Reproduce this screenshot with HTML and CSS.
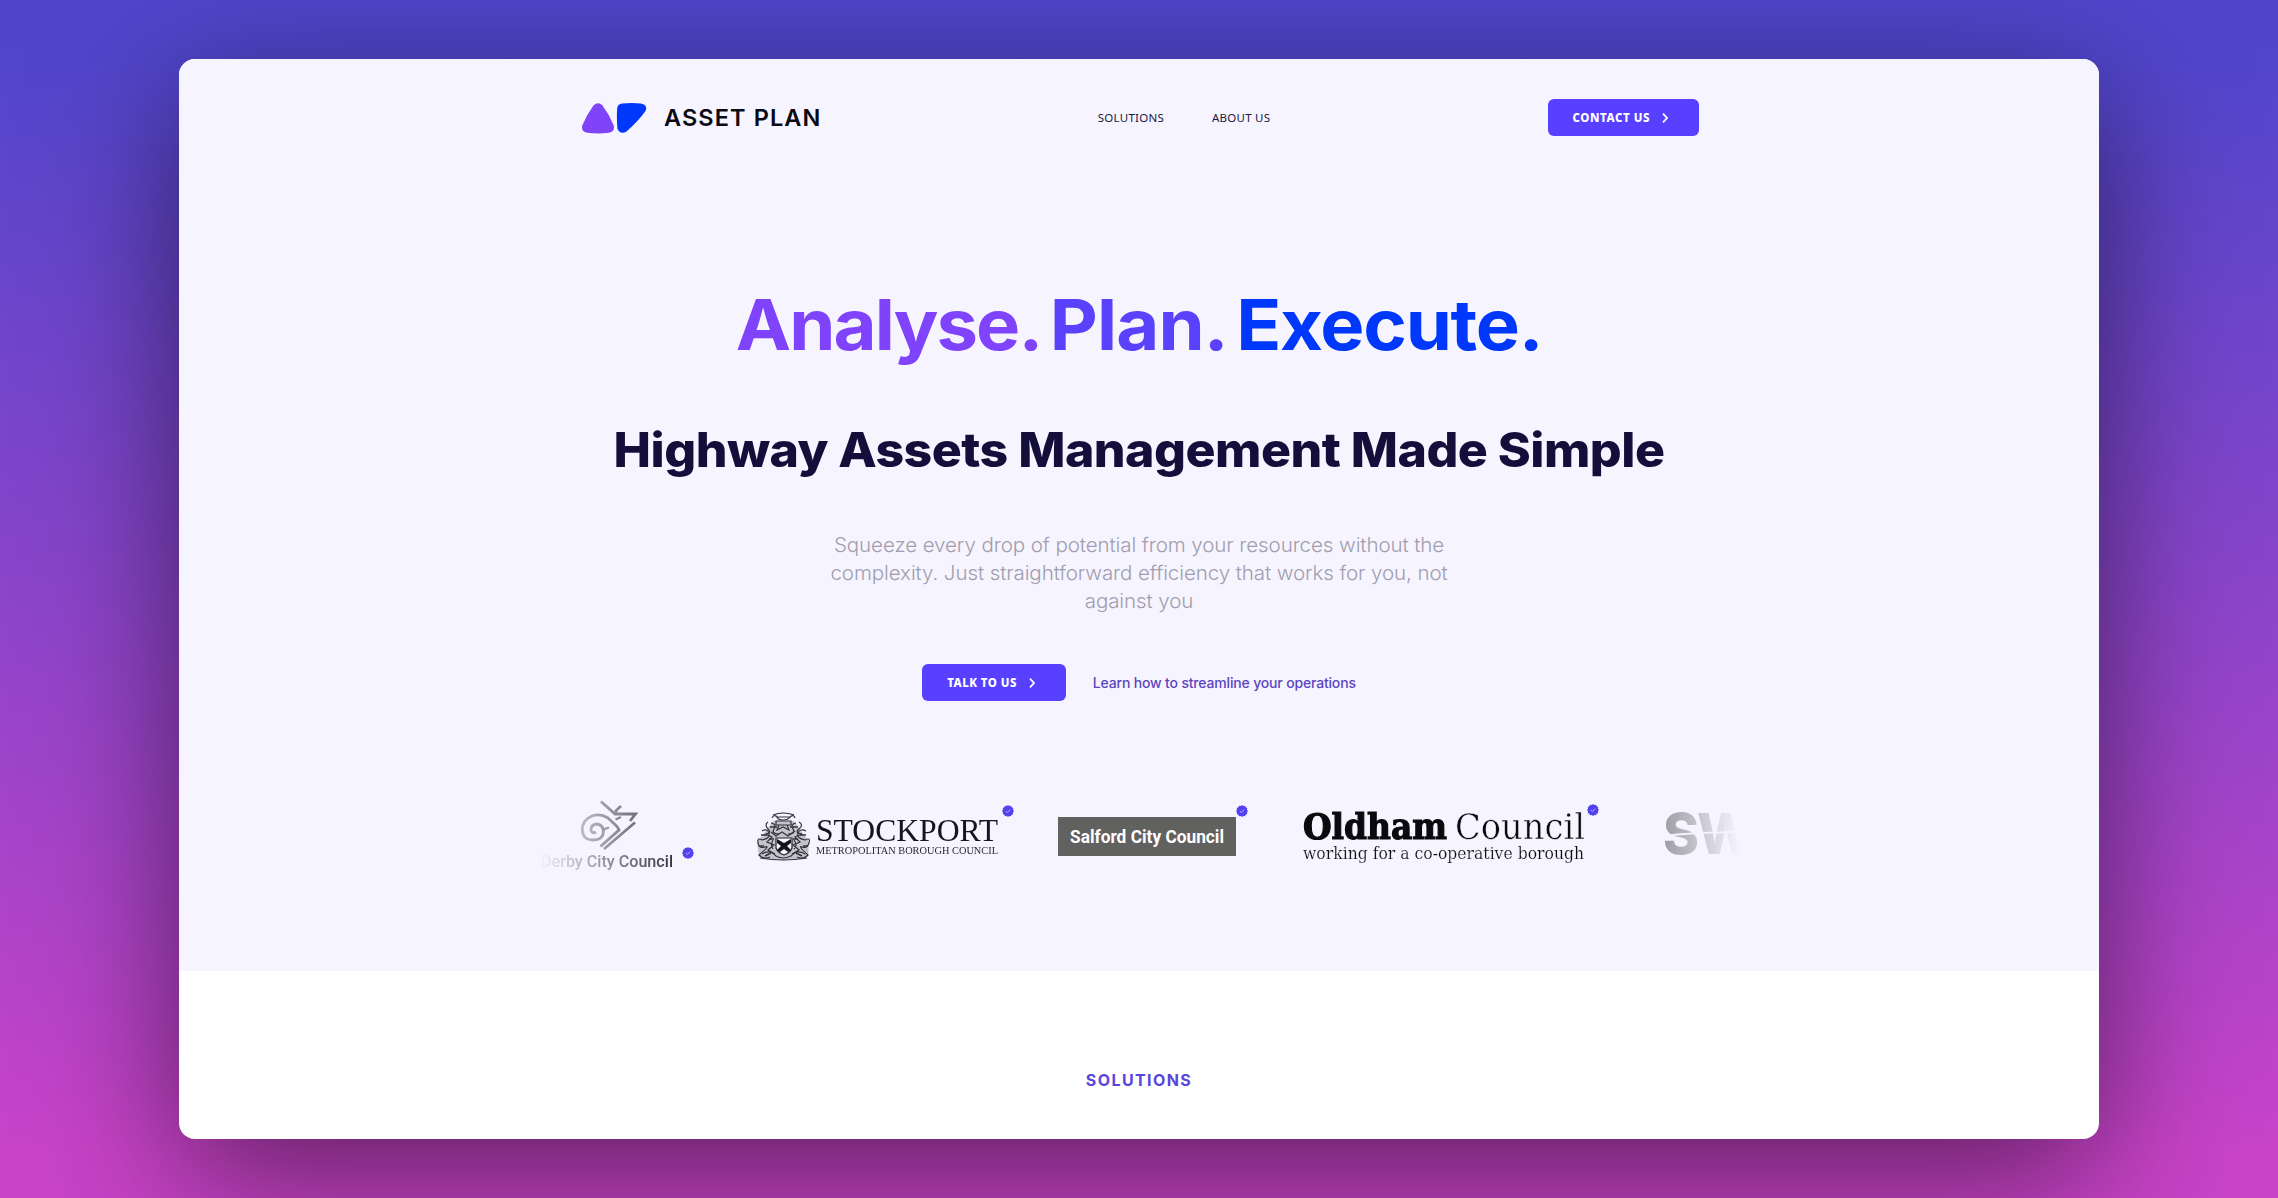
FILE: index.html
```html
<!DOCTYPE html>
<html lang="en">
<head>
<meta charset="utf-8">
<title>Asset Plan</title>
<link rel="stylesheet" href="styles.css">
</head>
<body>
<svg width="0" height="0" class="defs" aria-hidden="true">
  <symbol id="verified" viewBox="0 0 12 12">
    <path d="M6 0l1.300 1L9 .8l.7 1.500 1.500.7L11 4.700 12 6l-1 1.300.2 1.700-1.500.7L9 11.200 7.300 11 6 12l-1.300-1-1.700.2-.7-1.500L.8 9 1 7.300 0 6l1-1.300L.8 3l1.500-.7L3 .8 4.700 1z" fill="#5442f0"/>
    <path d="M3.900 6.100l1.500 1.400 2.800-2.900" fill="none" stroke="#b9aeff" stroke-width="1"/>
  </symbol>
</svg>
<div class="card">
  <section class="hero">
    <header class="header">
      <a class="brand">
        <svg width="65" height="31" viewBox="0 0 65 31">
          <path d="M11.500 2.500Q16 -2 20.500 2.500Q27.500 12 31.500 22Q33.500 28.500 27 29.800Q16 31 5 29.800Q-1.500 28.500 .5 22Q4.500 12 11.500 2.500Z" fill="#7f43f8"/>
          <path d="M40 .4Q50 -.2 59 .4Q66 2 63.500 8Q56 18.500 44.500 28.500Q38 32 35.400 25.500Q34.500 15 35.200 5Q36 .7 40 .4Z" fill="#0038fb"/>
        </svg>
        <span class="brand-name">ASSET PLAN</span>
      </a>
      <nav class="nav"><a>SOLUTIONS</a><a>ABOUT US</a></nav>
      <a class="button">CONTACT US
        <svg width="6" height="10" viewBox="0 0 6 10"><path d="M1 .6L5 5 1 9.400" fill="none" stroke="#fff" stroke-width="1.700"/></svg>
      </a>
    </header>
    <h1 class="headline"><span class="analyse">Analyse.</span><span class="plan">Plan.</span><span class="execute">Execute.</span></h1>
    <h2 class="subhead">Highway Assets Management Made Simple</h2>
    <p class="lead">Squeeze every drop of potential from your resources without the<br>complexity. Just straightforward efficiency that works for you, not<br>against you</p>
    <div class="actions">
      <a class="button">TALK TO US
        <svg width="6" height="10" viewBox="0 0 6 10"><path d="M1 .6L5 5 1 9.400" fill="none" stroke="#fff" stroke-width="1.700"/></svg>
      </a>
      <a class="link">Learn how to streamline your operations</a>
    </div>
    <div class="logos">
      <div class="logo derby">
        <svg width="136" height="74" viewBox="0 0 136 74">
          <g fill="none" stroke="#45434c" stroke-width="2.800">
            <path d="M62 1.500L76 14H96.500L91 21M77 14V10.500L82 6"/>
            <path d="M96 22.500L65 49M61.500 46.500L80 30Q79 27.500 77.500 26L69 18Q61 13 53 16Q43 20 43.200 30Q44 40 54 40Q64 40 64.500 31.500Q64 24.500 57.500 24Q51.500 25 52 30.500Q53.500 34 57 32"/>
            <path d="M63 30L70 27.500M76.500 19.500L82 17" stroke-width="2.200"/>
          </g>
          <text x="2" y="67" textLength="132" lengthAdjust="spacingAndGlyphs" class="din" fill="#37353e">Derby City Council</text>
        </svg>
        <svg class="badge"><use href="#verified"/></svg>
      </div>
      <div class="logo stockport">
        <svg width="242" height="50" viewBox="0 0 242 50">
          <path d="M17 9L38 9L46 20L53 30L52 45Q27 51 3 45L1 30L9 20Z" fill="#c4c3cb"/>
          <g fill="none" stroke="#33323a" stroke-width="1.200">
            <path d="M17 3Q27 -1 38 3M16 6Q18 2 21 5L34 5Q38 2 39 6M21 5Q22 8 27 8T34 5"/>
            <path d="M20 9H35V13H20ZM23 13L21 18L27 15L33 18L31 13M12 10Q8 13 12 17T10 22M43 10Q48 13 43 17T46 22M15 11Q21 12 18 17T23 22M40 11Q34 12 37 17T32 22"/>
            <path d="M6 19Q11 16 13 21T6 28Q1 25 2 31T9 35T3 43Q8 48 14 45M50 19Q44 16 42 21T49 28Q55 25 53 31T46 35T52 43Q47 48 41 45"/>
            <path d="M9 22L16 25L11 30L18 33L12 38L19 42M46 22L39 25L44 30L37 33L43 38L36 42M4 46Q27 50 51 46M6 42Q14 37 20 44Q27 48 35 44Q41 37 49 42M15 20L20 24L26 20L32 24L39 19M17 28Q14 33 17 37M38 28Q42 33 38 37"/>
            <path d="M5 23H11M3 34H8M47 34H52M44 23H50M13 27H18M37 27H42M9 44L15 41M40 41L46 44M14 15H21M34 15H42" stroke-width="1.600"/>
          </g>
          <path d="M20 26H36V36Q34 41 28 43Q22 41 20 36Z" fill="#f6f4fe" stroke="#222" stroke-width="1.200"/>
          <path d="M21 27L28 31L35 27V31L31 34L35 38L32 40L28 37L24 40L21 38L25 34L21 31Z" fill="#15151a"/>
          <text x="60" y="28.500" textLength="182" lengthAdjust="spacingAndGlyphs" class="serif" font-size="32.500" fill="#16151f">STOCKPORT</text>
          <text x="60" y="42" textLength="182" lengthAdjust="spacingAndGlyphs" class="serif" font-size="11" fill="#2b2a33">METROPOLITAN BOROUGH COUNCIL</text>
        </svg>
        <svg class="badge"><use href="#verified"/></svg>
      </div>
      <div class="logo salford">
        <svg width="178" height="39" viewBox="0 0 178 39">
          <rect width="178" height="39" fill="#616160"/>
          <text x="12" y="26" textLength="154" lengthAdjust="spacingAndGlyphs" class="din bold" fill="#fff">Salford City Council</text>
        </svg>
        <svg class="badge"><use href="#verified"/></svg>
      </div>
      <div class="logo oldham">
        <svg width="282" height="52" viewBox="0 0 282 52">
          <text x="0" y="27" textLength="144" lengthAdjust="spacingAndGlyphs" class="slab heavy">Oldham</text>
          <text x="152" y="27" textLength="130" lengthAdjust="spacingAndGlyphs" class="slab thin">Council</text>
          <text x="0" y="47" textLength="281" lengthAdjust="spacingAndGlyphs" class="slab small">working for a co-operative borough</text>
        </svg>
        <svg class="badge"><use href="#verified"/></svg>
      </div>
      <div class="logo sw">
        <svg width="88" height="44" viewBox="0 0 88 44">
          <text x="-2" y="42" textLength="90" lengthAdjust="spacingAndGlyphs" class="swt">SW</text>
          <path d="M0 24Q30 20 88 20" fill="none" stroke="#f6f4fe" stroke-width="2"/>
        </svg>
      </div>
    </div>
  </section>
  <section class="solutions">
    <h3 class="eyebrow">SOLUTIONS</h3>
  </section>
</div>
</body>
</html>
```
FILE: styles.css
```css
* { box-sizing: border-box; }
body {
  margin: 0;
  height: 1198px;
  padding: 59px 179px;
  overflow: hidden;
  background: linear-gradient(#5046cc 0%, #5046cc 4%, #c843c8 96%, #c843c8 100%);
  font-family: Inter, "Liberation Sans", sans-serif;
}
.defs { position: absolute; }
.card {
  width: 1920px;
  height: 1080px;
  border-radius: 16px;
  overflow: hidden;
  background: #fff;
  box-shadow: 0 36px 140px rgba(0, 0, 0, .54);
}
.hero { height: 912px; background: #f6f4fe; }
.header {
  display: flex;
  justify-content: space-between;
  align-items: center;
  padding: 40px 400px 0 403px;
}
.brand { display: flex; align-items: center; gap: 17px; width: 239px; padding-top: 1px; }
.brand svg { flex: none; }
.brand-name { font-size: 23.5px; font-weight: 600; line-height: 30px; letter-spacing: 1.1px; color: #0b0a14; white-space: nowrap; }
.nav { display: flex; gap: 48px; width: 173px; font: 400 11.5px/16px "Noto Sans", sans-serif; letter-spacing: .25px; color: #1c173f; white-space: nowrap; }
.button {
  display: flex;
  align-items: center;
  gap: 12px;
  height: 37px;
  padding: 0 31px 0 25px;
  border-radius: 6px;
  background: #5740ff;
  color: #fff;
  font: 800 11.5px/16px "Noto Sans", sans-serif;
  letter-spacing: .55px;
  white-space: nowrap;
}
.headline {
  display: flex;
  justify-content: center;
  gap: 8px;
  margin: 146px 0 0;
  font-size: 70px;
  font-weight: 700;
  line-height: 86px;
  transform: scaleX(1.06);
}
.analyse { color: #7f43fb; letter-spacing: -1.8px; }
.plan { color: #5a41fb; letter-spacing: -.8px; }
.execute { color: #0038fb; letter-spacing: -1.2px; }
.subhead { margin: 52px 0 0; text-align: center; font-size: 47.5px; font-weight: 800; line-height: 60px; letter-spacing: -.5px; color: #140f3a; transform: scaleX(1.054); }
.lead { margin: 51px 0 0; text-align: center; font-size: 20px; font-weight: 300; line-height: 28px; letter-spacing: -.1px; color: #a19eaf; transform: scaleX(1.028); }
.actions { display: flex; justify-content: center; align-items: center; gap: 27px; margin-top: 49px; }
.actions .button { letter-spacing: .45px; }
.link { font-size: 14px; font-weight: 500; letter-spacing: -.17px; color: #5b45c0; }
.logos {
  display: flex;
  width: 1200px;
  height: 78px;
  margin: 99px auto 0;
  overflow: hidden;
  -webkit-mask-image: linear-gradient(90deg, transparent, #000 11%, #000 89%, transparent);
  mask-image: linear-gradient(90deg, transparent, #000 11%, #000 89%, transparent);
}
.logo { display: flex; flex: none; align-items: flex-start; }
.logo svg { overflow: visible; }
.badge { width: 12px; height: 12px; flex: none; }
.derby { gap: 7px; }
.derby .badge { margin-top: 47px; }
.stockport { margin: 5px 0 0 62px; padding-top: 7px; gap: 4px; }
.stockport .badge { margin-top: -7px; }
.salford { margin: 5px 0 0 44px; }
.salford > svg:first-child { margin-top: 12px; }
.oldham { margin: 4px 0 0 55px; gap: 2px; }
.oldham > svg:first-child { margin-top: 8px; }
.sw { margin: 12px 0 0 66px; }
.din { font-family: Roboto, sans-serif; font-size: 17px; font-weight: 500; }
.din.bold { font-size: 18px; font-weight: 700; }
.serif { font-family: "Liberation Serif", serif; }
.slab { font-family: "DejaVu Serif", serif; fill: #0a0a0e; }
.heavy { font-size: 35px; font-weight: 700; stroke: #0a0a0e; stroke-width: 1.2px; }
.thin { font-size: 35px; stroke: #f6f4fe; stroke-width: .5px; }
.small { font-size: 17px; stroke: #f6f4fe; stroke-width: .2px; }
.swt { font-family: Inter, sans-serif; font-size: 57px; font-weight: 800; fill: #5c5b61; letter-spacing: -2px; }
.solutions { display: flex; justify-content: center; padding-top: 99px; }
.eyebrow { margin: 0; font-size: 16px; font-weight: 700; line-height: 20px; letter-spacing: 1.4px; color: #5b45dc; }
```
